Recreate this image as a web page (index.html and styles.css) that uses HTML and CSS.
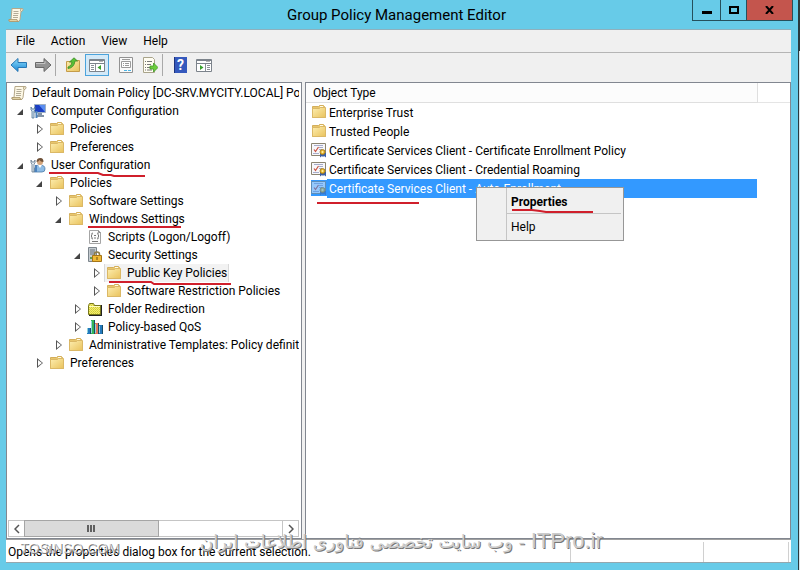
FILE: index.html
```html
<!DOCTYPE html>
<html lang="en">
<head>
    <meta charset="UTF-8">
    <meta name="viewport" content="width=device-width, initial-scale=1.0">
    <title>Group Policy Management Editor</title>
    <link rel="stylesheet" href="styles.css">
</head>
<body>
    <!-- shared icons -->
    <svg class="sprite" aria-hidden="true">
        <defs>
            <linearGradient id="folderFill" x1="0" y1="0" x2="1" y2="1">
                <stop offset="0" stop-color="#fdeeb0"/>
                <stop offset="1" stop-color="#e9c25c"/>
            </linearGradient>
            <linearGradient id="blueArrow" x1="0" y1="0" x2="0" y2="1">
                <stop offset="0" stop-color="#8fdcf8"/>
                <stop offset="1" stop-color="#1787d8"/>
            </linearGradient>
            <pattern id="dots" width="2" height="2" patternUnits="userSpaceOnUse">
                <rect width="2" height="2" fill="#f4f06c"/>
                <rect width="1" height="1" fill="#cfc83a"/>
                <rect x="1" y="1" width="1" height="1" fill="#d8d24a"/>
            </pattern>
        </defs>
        <symbol id="folder" viewBox="0 0 16 16">
            <path d="M1.5 2.5h6l1 -1h4l1 1v2h1v9h-13z" fill="#e8c66c" stroke="#d3ae5c"/>
            <path d="M9 2.5h3" stroke="#fffbe8"/>
            <path d="M1.5 4.5h7l1-1h5v10h-13z" fill="url(#folderFill)" stroke="#dbb866"/>
        </symbol>
        <symbol id="scroll" viewBox="0 0 16 16">
            <path d="M4 1.5h10q1.5 0 1 1.5t-2 1.5l-1 8q-.5 2-2 2H2q-1.500 0-1-2h2z" fill="#fdf8e6" stroke="#b5a88a"/>
            <path d="M1 12.500h8q0 2 1.500 2H2q-1.500 0-1-2z" fill="#e3d3a5" stroke="#a8966b" stroke-width=".8"/>
            <path d="M13 4.500q-1-1 0-2.500" stroke="#a8966b" fill="none"/>
            <path d="M5.500 4.500h5M5.500 6.500h5M5 8.500h5M5 10.500h5" stroke="#b3ac98"/>
        </symbol>
        <symbol id="computer" viewBox="0 0 16 16">
            <path d="M4.500 1.500h11v8h-11z" fill="#1b3fc4" stroke="#9fb0c4"/>
            <path d="M9 2h6v7z" fill="#5a8df0"/>
            <path d="M8 10h4v2h2v2H6v-2h2z" fill="#8293a6"/>
            <path d="M1 4v3l1 1v7h2V8l1-1V4L4 6H2z" fill="#cfe0ef" stroke="#4e7396" stroke-width=".8"/>
            <path d="M5.500 8h2v7h-2z" fill="#4c82bd"/>
        </symbol>
        <symbol id="user" viewBox="0 0 16 16">
            <path d="M4 15q0-7 6-7 5 0 5 4 0 3-3 3z" fill="#8dbce6" stroke="#4c7ba7" stroke-width=".8"/>
            <path d="M8 8l2 3 2-3z" fill="#fff"/>
            <circle cx="10" cy="5" r="3" fill="#d5a67c"/>
            <path d="M6.500 5q0-4 4-4 3 0 3 4-3 0-4-2-1 2-3 2z" fill="#6e5138"/>
            <path d="M1 3v3l1 1v8h2V7l1-1V3L4 5H2z" fill="#e5edf4" stroke="#61768a" stroke-width=".8"/>
            <path d="M5 8h2v7H5z" fill="#4c82bd"/>
        </symbol>
        <symbol id="script" viewBox="0 0 16 16">
            <path d="M2.500 1.500h9l2 2v11h-11z" fill="#fbfbfb" stroke="#a5a5a5"/>
            <path d="M11.500 1.500v2h2" fill="none" stroke="#888"/>
            <path d="M6 4q-2 0-1 2l-1 1 1 1q-1 2 1 2M10 4q2 0 1 2l1 1-1 1q1 2-1 2M5 12.500h6M7 6.500h2M7 9h2" fill="none" stroke="#777"/>
        </symbol>
        <symbol id="security" viewBox="0 0 16 16">
            <path d="M1.500 .5h8v14h-8z" fill="#c5cbd0" stroke="#7c858c"/>
            <path d="M3 3h5M3 5h5M3 7h5" stroke="#68727a"/>
            <path d="M3 10h2v2H3z" fill="#5f9c4c"/>
            <path d="M7.500 9V7.500q0-2.500 2.500-2.500t2.500 2.500V9" fill="none" stroke="#8c7b48" stroke-width="1.500"/>
            <path d="M5.500 8.500h9v6h-9z" fill="#efb936" stroke="#a57517"/>
            <path d="M10 10v3" stroke="#70500f"/>
        </symbol>
        <symbol id="redirect" viewBox="0 0 16 16">
            <path d="M2 4h13v11H2z" fill="#222"/>
            <path d="M1.500 4.500l1-2h4l1 2h6v9h-12z" fill="url(#dots)" stroke="#77771c"/>
            <path d="M2 5.500h11" stroke="#fffdc0"/>
        </symbol>
        <symbol id="qos" viewBox="0 0 16 16">
            <path d="M0 9h4v6H0z" fill="#2379bd"/>
            <path d="M4 1h4v14H4z" fill="#35b455"/>
            <path d="M8 4h4v11H8z" fill="#e2785b"/>
            <path d="M12 6h4v9h-4z" fill="#2379bd"/>
            <path d="M3.500 9v6M7.500 1v14M11.500 4v11M15.500 6v9" stroke="#174c66"/>
            <path d="M.5 9v5M4.500 2v12M8.500 5v9M12.500 7v7" stroke="#8fd5dc"/>
        </symbol>
        <symbol id="cert" viewBox="0 0 16 16">
            <path d="M.5 1.500h14v12H.5z" fill="#f7f7fb" stroke="#8b8471"/>
            <path d="M3 3.500h9M8 5.500h4M8 7.500h3M2 11.500h6" stroke="#a7acc8"/>
            <path d="M3 7.500l1.500 2L7.500 5" fill="none" stroke="#c9503f" stroke-width="1.200"/>
            <path d="M9 11v4.500l2-1.500 1 1 1-1 2 1.500V11z" fill="#3c5fa5"/>
            <circle cx="11.500" cy="10" r="2.500" fill="#e8b62d" stroke="#9c7417" stroke-width=".8"/>
            <circle cx="11.500" cy="10" r="1" fill="#fff0a5"/>
        </symbol>
        <symbol id="arrowLeft" viewBox="0 0 18 16">
            <path d="M1 8l7-6.500v4h8.500v5H8v4z" fill="url(#blueArrow)" stroke="#2877b4"/>
        </symbol>
        <symbol id="arrowRight" viewBox="0 0 18 16">
            <path d="M17 8l-7-6.500v4H1.500v5H10v4z" fill="#939393" stroke="#686868"/>
            <path d="M2 6.500h9V4" stroke="#c2c2c2" fill="none"/>
        </symbol>
        <symbol id="upFolder" viewBox="0 0 16 16">
            <path d="M1.500 4.500h5l1-1h7v11h-13z" fill="url(#folderFill)" stroke="#c59c49"/>
            <path d="M3 10q4-1 4-5H4.500L9 .8 12.500 4H10q-1 7-7 7.500z" fill="#59c136" stroke="#3c8a26" stroke-width=".8"/>
        </symbol>
        <symbol id="paneLeft" viewBox="0 0 16 16">
            <path d="M.5 2.500h15v12H.5z" fill="#fff" stroke="#7c838b"/>
            <path d="M1 3.500h14M1 6.500h14" stroke="#7c838b"/>
            <path d="M10.500 4.500h1M12.500 4.500h1" stroke="#666"/>
            <path d="M6.500 7v7M2 8.500h3M2 10.500h3M2 12.500h3" stroke="#8a9097"/>
            <path d="M12 8v5L8.500 10.500z" fill="#38a22d"/>
        </symbol>
        <symbol id="paneRight" viewBox="0 0 16 16">
            <path d="M.5 2.500h15v12H.5z" fill="#fff" stroke="#7c838b"/>
            <path d="M1 3.500h14M1 6.500h14" stroke="#7c838b"/>
            <path d="M10.500 4.500h1M12.500 4.500h1" stroke="#666"/>
            <path d="M9.500 7v7M11 8.500h3M11 10.500h3M11 12.500h3" stroke="#8a9097"/>
            <path d="M4 8v5l3.500-2.500z" fill="#38a22d"/>
        </symbol>
        <symbol id="props" viewBox="0 0 16 16">
            <path d="M1.500 .5h13v15h-13z" fill="#fafafa" stroke="#929292"/>
            <path d="M3.500 4.500h9v6h-9zM4 2.500h8" fill="#fff" stroke="#9b9b9b"/>
            <path d="M5 6.500h1M7 6.500h4M5 8.500h1M7 8.500h4" stroke="#999"/>
            <path d="M6 13.500h3M10 13.500h3" stroke="#4db5e5"/>
        </symbol>
        <symbol id="export" viewBox="0 0 16 16">
            <path d="M1.500 .5h9l2 2v13h-11z" fill="#fffdf2" stroke="#a9a48b"/>
            <path d="M3 4.500h1M5 4.500h5M3 7.500h1M5 7.500h4M3 10.500h1M5 10.500h3M3 13h1M5 13h5" stroke="#777"/>
            <path d="M8 9h3.500V6L16 10.500 11.500 15v-3H8z" fill="#6ccd3c" stroke="#43992a" stroke-width=".8"/>
        </symbol>
    </svg>

    <div class="window">
        <header class="titlebar">
            <svg class="icon app-icon"><use href="#scroll"/></svg>
            <h1>Group Policy Management Editor</h1>
            <div class="window-controls">
                <button class="minimize" aria-label="Minimize"><span></span></button>
                <button class="maximize" aria-label="Maximize"><span></span></button>
                <button class="close" aria-label="Close">
                    <svg width="9" height="8" viewBox="0 0 9 8"><path d="M1 0l7 8M8 0L1 8" stroke="#000" stroke-width="2"/></svg>
                </button>
            </div>
        </header>

        <div class="frame">
            <nav class="menubar">
                <button>File</button>
                <button>Action</button>
                <button>View</button>
                <button>Help</button>
            </nav>

            <div class="toolbar">
                <button aria-label="Back"><svg class="icon wide"><use href="#arrowLeft"/></svg></button>
                <button aria-label="Forward"><svg class="icon wide"><use href="#arrowRight"/></svg></button>
                <span class="separator"></span>
                <button aria-label="Up one level"><svg class="icon"><use href="#upFolder"/></svg></button>
                <button class="pressed" aria-label="Show or hide console tree"><svg class="icon"><use href="#paneLeft"/></svg></button>
                <span class="space"></span>
                <button aria-label="Item properties"><svg class="icon"><use href="#props"/></svg></button>
                <button aria-label="Export list"><svg class="icon"><use href="#export"/></svg></button>
                <span class="separator"></span>
                <button class="help" aria-label="Help topics"><span>?</span></button>
                <button aria-label="Show or hide action pane"><svg class="icon"><use href="#paneRight"/></svg></button>
            </div>

            <main class="panes">
                <section class="tree-pane">
                    <div class="tree">
                        <div class="row root"><svg class="icon"><use href="#scroll"/></svg><span>Default Domain Policy [DC-SRV.MYCITY.LOCAL] Policy</span></div>
                        <ul>
                            <li>
                                <div class="row"><button class="toggle open" aria-label="Collapse"></button><svg class="icon"><use href="#computer"/></svg><span>Computer Configuration</span></div>
                                <ul>
                                    <li><div class="row"><button class="toggle" aria-label="Expand"></button><svg class="icon"><use href="#folder"/></svg><span>Policies</span></div></li>
                                    <li><div class="row"><button class="toggle" aria-label="Expand"></button><svg class="icon"><use href="#folder"/></svg><span>Preferences</span></div></li>
                                </ul>
                            </li>
                            <li>
                                <div class="row"><button class="toggle open" aria-label="Collapse"></button><svg class="icon"><use href="#user"/></svg><span>User Configuration</span></div>
                                <ul>
                                    <li>
                                        <div class="row"><button class="toggle open" aria-label="Collapse"></button><svg class="icon"><use href="#folder"/></svg><span>Policies</span></div>
                                        <ul>
                                            <li><div class="row"><button class="toggle" aria-label="Expand"></button><svg class="icon"><use href="#folder"/></svg><span>Software Settings</span></div></li>
                                            <li>
                                                <div class="row"><button class="toggle open" aria-label="Collapse"></button><svg class="icon"><use href="#folder"/></svg><span>Windows Settings</span></div>
                                                <ul>
                                                    <li><div class="row"><i class="toggle-gap"></i><svg class="icon"><use href="#script"/></svg><span>Scripts (Logon/Logoff)</span></div></li>
                                                    <li>
                                                        <div class="row"><button class="toggle open" aria-label="Collapse"></button><svg class="icon"><use href="#security"/></svg><span>Security Settings</span></div>
                                                        <ul>
                                                            <li><div class="row selected"><button class="toggle" aria-label="Expand"></button><svg class="icon"><use href="#folder"/></svg><span>Public Key Policies</span></div></li>
                                                            <li><div class="row"><button class="toggle" aria-label="Expand"></button><svg class="icon"><use href="#folder"/></svg><span>Software Restriction Policies</span></div></li>
                                                        </ul>
                                                    </li>
                                                    <li><div class="row"><button class="toggle" aria-label="Expand"></button><svg class="icon"><use href="#redirect"/></svg><span>Folder Redirection</span></div></li>
                                                    <li><div class="row"><button class="toggle" aria-label="Expand"></button><svg class="icon"><use href="#qos"/></svg><span>Policy-based QoS</span></div></li>
                                                </ul>
                                            </li>
                                            <li><div class="row"><button class="toggle" aria-label="Expand"></button><svg class="icon"><use href="#folder"/></svg><span>Administrative Templates: Policy definitions</span></div></li>
                                        </ul>
                                    </li>
                                    <li><div class="row"><button class="toggle" aria-label="Expand"></button><svg class="icon"><use href="#folder"/></svg><span>Preferences</span></div></li>
                                </ul>
                            </li>
                        </ul>
                    </div>
                    <div class="scrollbar">
                        <button aria-label="Scroll left"><svg width="6" height="10" viewBox="0 0 6 10"><path d="M5 1L1 5l4 4"/></svg></button>
                        <div class="thumb"><i></i><i></i><i></i></div>
                        <button class="end" aria-label="Scroll right"><svg width="6" height="10" viewBox="0 0 6 10"><path d="M1 1l4 4-4 4"/></svg></button>
                    </div>
                </section>

                <section class="list-pane">
                    <table>
                        <thead>
                            <tr><th>Object Type</th><td></td></tr>
                        </thead>
                        <tbody>
                            <tr><td><div class="item"><svg class="icon"><use href="#folder"/></svg><span>Enterprise Trust</span></div></td><td></td></tr>
                            <tr><td><div class="item"><svg class="icon"><use href="#folder"/></svg><span>Trusted People</span></div></td><td></td></tr>
                            <tr><td><div class="item"><svg class="icon"><use href="#cert"/></svg><span>Certificate Services Client - Certificate Enrollment Policy</span></div></td><td></td></tr>
                            <tr><td><div class="item"><svg class="icon"><use href="#cert"/></svg><span>Certificate Services Client - Credential Roaming</span></div></td><td></td></tr>
                            <tr class="selected"><td><div class="item"><svg class="icon"><use href="#cert"/></svg><span>Certificate Services Client - Auto-Enrollment</span></div></td><td></td></tr>
                        </tbody>
                    </table>
                </section>
            </main>

            <footer class="statusbar">
                <p>Opens the properties dialog box for the current selection.</p>
                <span></span>
                <span></span>
            </footer>
        </div>

        <div class="context-menu">
            <button class="default">Properties</button>
            <hr>
            <button>Help</button>
        </div>

        <!-- red pen marks -->
        <svg class="marks" width="800" height="570" viewBox="0 0 800 570" aria-hidden="true">
            <path d="M49 173h49l5 2h8l3 1h31"/>
            <path d="M88 227h93"/>
            <path d="M109 282h42l3 2h77"/>
            <path d="M317 203h102"/>
            <path d="M512 210h20l8 1 6 1h47"/>
        </svg>

        <div class="watermark site">TOSINSO.COM</div>
        <div class="watermark tagline" dir="rtl" lang="fa"><b dir="ltr">ITPro.ir</b> - وب سایت تخصصی فناوری اطلاعات ایران</div>
    </div>
</body>
</html>
```
FILE: styles.css
```css
* {
    margin: 0;
    padding: 0;
    box-sizing: border-box;
}
body {
    font-family: Roboto, "Open Sans", sans-serif;
    font-size: 12px;
    line-height: 18px;
    color: #000;
    background: linear-gradient(#2a3a3e 51px, #d5e6ec 51px);
    overflow: hidden;
}
button {
    font: inherit;
    color: inherit;
    background: none;
    border: none;
}
ul {
    list-style: none;
}
.sprite {
    position: absolute;
    width: 0;
    height: 0;
}
.icon {
    width: 16px;
    height: 16px;
    flex: none;
    display: block;
}
.icon.wide {
    width: 18px;
}
.window {
    position: relative;
    display: flex;
    flex-direction: column;
    height: 100vh;
    margin-right: 1px;
    padding: 0 7px 7px 6px;
    background: #67cbe8;
    border-right: 1px solid #2a3a3e;
}

/* title bar */
.titlebar {
    display: grid;
    grid-template-columns: 1fr auto 1fr;
    height: 29px;
    margin: 0 -2px 0 -6px;
}
.titlebar h1 {
    font-size: 15px;
    font-weight: normal;
    line-height: 30px;
}
.app-icon {
    margin: 7px 8px;
}
.window-controls {
    display: flex;
    justify-self: end;
    height: 21px;
    border: 1px solid #25505c;
    border-top: none;
}
.window-controls button {
    display: flex;
    align-items: center;
    justify-content: center;
    width: 26px;
    border-left: 1px solid #25505c;
}
.window-controls .minimize {
    width: 27px;
    border-left: none;
}
.window-controls .close {
    width: 46px;
    background: #c4554d;
}
.minimize span {
    width: 10px;
    height: 3px;
    margin-top: 4px;
    background: #000;
}
.maximize span {
    width: 10px;
    height: 8px;
    border: 2px solid #000;
}

.frame {
    display: flex;
    flex: 1;
    flex-direction: column;
    min-height: 0;
    background: #f0f0f0;
    border-top: 1px solid #8fb0bc;
    border-bottom: 1px solid #94a7ae;
}
.menubar {
    display: flex;
    height: 23px;
    padding-left: 2px;
    border-bottom: 1px solid #b5b5b5;
}
.menubar button {
    padding: 0 8px;
    line-height: 22px;
}
.toolbar {
    display: flex;
    align-items: center;
    height: 29px;
    padding: 0 0 5px 1px;
}
.toolbar button {
    display: flex;
    align-items: center;
    justify-content: center;
    width: 24px;
    height: 22px;
}
.toolbar .pressed {
    background: #d3e9f8;
    border: 1px solid #4ba3dc;
}
.toolbar .separator {
    width: 1px;
    height: 22px;
    margin: 0 5px 0 0;
    background: #a9a9a9;
}
.toolbar .space {
    width: 5px;
}
.toolbar .help span {
    width: 13px;
    height: 16px;
    font-size: 14px;
    font-weight: bold;
    line-height: 16px;
    color: #fff;
    background: #3559bd;
    border-left: 1px solid #1e347e;
}

/* panes */
.panes {
    display: flex;
    flex: 1;
    gap: 3px;
    min-height: 0;
}
.tree-pane {
    display: flex;
    flex-direction: column;
    width: 296px;
    padding: 1px;
    background: #fff;
    border: 1px solid #828790;
}
.tree {
    flex: 1;
    margin-right: 1px;
    overflow: hidden;
    white-space: nowrap;
}
.tree > ul {
    padding-left: 6px;
}
.tree ul ul {
    padding-left: 19px;
}
.row {
    display: flex;
    align-items: center;
    height: 18px;
}
.row .icon {
    margin-right: 5px;
}
.row.root {
    padding-left: 3px;
}
.toggle,
.toggle-gap {
    width: 16px;
    height: 18px;
    flex: none;
}
.toggle::before {
    content: "";
    display: block;
    width: 6px;
    height: 10px;
    margin: 0 0 0 4px;
    background: #555;
    clip-path: polygon(evenodd, 0 0, 6px 5px, 0 10px, 0 0, 1px 2px, 1px 8px, 5px 5px, 1px 2px);
}
.toggle.open::before {
    width: 6px;
    height: 6px;
    margin: 2px 0 0 3px;
    background: #444;
    clip-path: polygon(100% 0, 100% 100%, 0 100%);
}
.row.selected span {
    padding-right: 2px;
}
.row.selected {
    width: fit-content;
    background: linear-gradient(to right, #fff 14px, #d9d9d9 14px, #d9d9d9 15px, #f2f2f2 15px);
    box-shadow: inset -1px 0 #d9d9d9;
}
.scrollbar {
    display: flex;
    height: 17px;
    margin-right: 1px;
    border: 1px solid #c5c5c5;
}
.scrollbar button {
    width: 16px;
    display: flex;
    align-items: center;
    justify-content: center;
}
.scrollbar .end {
    margin-left: auto;
    border-left: 1px solid #c5c5c5;
}
.scrollbar path {
    fill: none;
    stroke: #555;
    stroke-width: 1.5;
}
.thumb {
    display: flex;
    align-items: center;
    justify-content: center;
    gap: 1px;
    width: 46%;
    background: #dadada;
    outline: 1px solid #a5a5a5;
}
.thumb i {
    width: 2px;
    height: 7px;
    background: #606060;
}
.list-pane {
    flex: 1;
    background: #fff;
    border: 1px solid #828790;
}
table {
    width: 100%;
    border-collapse: collapse;
    table-layout: fixed;
}
th {
    width: 451px;
    height: 19px;
    padding: 2px 0 0 7px;
    font-weight: normal;
    line-height: 16px;
    text-align: left;
    background: #fcfcfc;
    border-right: 1px solid #dfdfdf;
    border-bottom: 1px solid #dfdfdf;
}
thead td {
    border-bottom: 1px solid #e5e5e5;
}
.item {
    display: flex;
    align-items: center;
    height: 19px;
    padding-left: 5px;
}
.item span {
    flex: 1;
    padding: 1px 0 0 2px;
    line-height: 18px;
}
tr.selected span {
    color: #fff;
    background: #3399ff;
}
tr.selected .icon {
    background: #3399ff;
}
tr.selected .icon use {
    opacity: 0.5;
}
.statusbar {
    display: flex;
    height: 23px;
    padding: 2px 2px 0;
    background: #fff;
    border-top: 1px solid #a0a0a0;
}
.statusbar p {
    flex: 1;
    line-height: 21px;
}
.statusbar p,
.statusbar span {
    border-right: 1px solid #d0d0d0;
}
.statusbar span {
    width: 133px;
}
.statusbar span:last-child {
    width: 85px;
}

/* popup over the list */
.context-menu {
    position: absolute;
    left: 476px;
    top: 187px;
    width: 148px;
    padding: 2px;
    background: linear-gradient(to right, #f0f0f0 29px, #c5c5c5 29px, #c5c5c5 30px, #f0f0f0 30px);
    border: 1px solid #979797;
}
.context-menu button {
    display: block;
    width: 100%;
    height: 23px;
    padding-left: 32px;
    text-align: left;
}
.context-menu .default {
    font-weight: bold;
}
.context-menu hr {
    margin-left: 28px;
    border: none;
    border-top: 1px solid #c5c5c5;
    margin-bottom: 1px;
}
.marks {
    position: absolute;
    left: 0;
    top: 0;
    pointer-events: none;
}
.marks path {
    fill: none;
    stroke: #d01f2b;
    stroke-width: 2;
}
.watermark {
    position: absolute;
    white-space: nowrap;
    pointer-events: none;
}
.site {
    left: 20px;
    bottom: 12px;
    font: 14px/20px "Liberation Sans", sans-serif;
    color: rgba(255, 255, 255, 0.7);
    text-shadow: 1px 1px #777;
}
.tagline {
    left: 200px;
    bottom: 14px;
    font: 18px/28px "DejaVu Sans", sans-serif;
    color: #ccc;
    text-shadow: 1px 1px #777;
}
.tagline b {
    font: 22px/28px "Liberation Sans", sans-serif;
}
```
